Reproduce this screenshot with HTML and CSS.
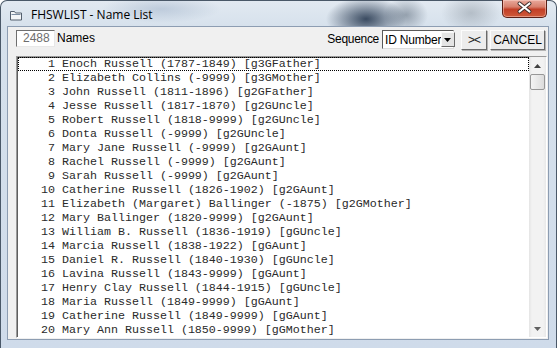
FILE: index.html
```
<!DOCTYPE html>
<html lang="en">
<head>
    <link rel="stylesheet" href="styles.css">
    <meta charset="UTF-8">
    <title>FHSWLIST - Name List</title>
</head>
<body>
    <div class="window">
        <div class="titlebar">
            <svg class="app-icon" width="14" height="12" viewBox="0 0 14 12">
                <path d="M1.5 2.5 h4 l1 1.5 h6 v7 h-11 z" fill="#f4f6f8" stroke="#55606e" stroke-width="1"/>
                <path d="M2.5 5.5 h9" stroke="#7d8ea3" stroke-width="1"/>
            </svg>
            <span class="title">FHSWLIST - Name List</span>
            <div class="close">
                <svg width="45" height="18" viewBox="0 0 45 18">
                    <path d="M17.5 4.5 l10 8 M27.5 4.5 l-10 8" stroke="#3b2a28" stroke-width="4" stroke-linecap="round"/>
                    <path d="M17.5 4.5 l10 8 M27.5 4.5 l-10 8" stroke="#ffffff" stroke-width="2.2" stroke-linecap="round"/>
                </svg>
            </div>
        </div>

        <div class="client">
            <div class="toolbar">
                <div class="count">2488</div>
                <span class="label">Names</span>
                <span class="label seq">Sequence</span>
                <div class="select">
                    <span>ID Number</span>
                    <div class="drop">
                        <svg width="8" height="4" viewBox="0 0 8 4"><path d="M0 0 h7 l-3.5 4 z" fill="#000"/></svg>
                    </div>
                </div>
                <div class="btn swap">&gt;&lt;</div>
                <div class="btn cancel">CANCEL</div>
            </div>

            <div class="list">
                <div class="rows">
                    <div class="row focus">    1 Enoch Russell (1787-1849) [g3GFather]</div>
                    <div class="row">    2 Elizabeth Collins (-9999) [g3GMother]</div>
                    <div class="row">    3 John Russell (1811-1896) [g2GFather]</div>
                    <div class="row">    4 Jesse Russell (1817-1870) [g2GUncle]</div>
                    <div class="row">    5 Robert Russell (1818-9999) [g2GUncle]</div>
                    <div class="row">    6 Donta Russell (-9999) [g2GUncle]</div>
                    <div class="row">    7 Mary Jane Russell (-9999) [g2GAunt]</div>
                    <div class="row">    8 Rachel Russell (-9999) [g2GAunt]</div>
                    <div class="row">    9 Sarah Russell (-9999) [g2GAunt]</div>
                    <div class="row">   10 Catherine Russell (1826-1902) [g2GAunt]</div>
                    <div class="row">   11 Elizabeth (Margaret) Ballinger (-1875) [g2GMother]</div>
                    <div class="row">   12 Mary Ballinger (1820-9999) [g2GAunt]</div>
                    <div class="row">   13 William B. Russell (1836-1919) [gGUncle]</div>
                    <div class="row">   14 Marcia Russell (1838-1922) [gGAunt]</div>
                    <div class="row">   15 Daniel R. Russell (1840-1930) [gGUncle]</div>
                    <div class="row">   16 Lavina Russell (1843-9999) [gGAunt]</div>
                    <div class="row">   17 Henry Clay Russell (1844-1915) [gGUncle]</div>
                    <div class="row">   18 Maria Russell (1849-9999) [gGAunt]</div>
                    <div class="row">   19 Catherine Russell (1849-9999) [gGAunt]</div>
                    <div class="row">   20 Mary Ann Russell (1850-9999) [gGMother]</div>
                </div>
                <div class="scrollbar">
                    <div class="arrow">
                        <svg width="7" height="4" viewBox="0 0 7 4"><path d="M3.5 0 l3.5 4 h-7 z" fill="#404040"/></svg>
                    </div>
                    <div class="thumb"></div>
                    <div class="track"></div>
                    <div class="arrow">
                        <svg width="7" height="4" viewBox="0 0 7 4"><path d="M0 0 h7 l-3.5 4 z" fill="#606060"/></svg>
                    </div>
                </div>
            </div>
        </div>
    </div>
</body>
</html>
```

FILE: styles.css
```
body {
    margin: 0;
    width: 557px;
    height: 348px;
    overflow: hidden;
    background-color: #ffffff;
    font-family: "Liberation Sans", Arial, sans-serif;
    font-size: 12px;
}

.window {
    box-sizing: border-box;
    width: 557px;
    height: 348px;
    display: flex;
    flex-direction: column;
    border: 1px solid #4a5868;
    border-bottom: none;
    border-radius: 7px 7px 0 0;
    background:
        radial-gradient(ellipse 40px 22px at 365px 18px, rgba(30, 48, 72, 0.85), rgba(30, 48, 72, 0) 100%),
        radial-gradient(ellipse 22px 18px at 405px 14px, rgba(90, 104, 120, 0.55), rgba(90, 104, 120, 0) 100%),
        radial-gradient(ellipse 60px 14px at 160px 8px, rgba(150, 170, 195, 0.45), rgba(150, 170, 195, 0) 100%),
        radial-gradient(ellipse 30px 20px at 470px 12px, rgba(120, 130, 140, 0.4), rgba(120, 130, 140, 0) 100%),
        linear-gradient(to bottom, #e2e9f1 0px, #d6e1ec 26px, #cfdbea 100%);
}

.titlebar {
    height: 25px;
    display: flex;
    align-items: flex-start;
    flex-shrink: 0;
}

.app-icon {
    margin: 8px 0 0 8px;
}

.title {
    margin: 6px 0 0 8px;
    font-family: "Open Sans", "Noto Sans", sans-serif;
    font-size: 12px;
    line-height: 16px;
    color: #000;
}

.close {
    margin: -1px 9px 0 auto;
    width: 45px;
    height: 18px;
    box-sizing: border-box;
    border: 1px solid #5b1f16;
    border-top: none;
    border-radius: 0 0 5px 5px;
    background: linear-gradient(to bottom, #e9a99c 0%, #d8806d 40%, #c23f27 55%, #cf5a3a 100%);
    box-shadow: inset 0 0 0 1px rgba(255, 220, 210, 0.45);
}

.close svg {
    display: block;
    margin: -1px 0 0 -1px;
}

.client {
    flex: 1;
    margin: 0 7px 8px 6px;
    border: 1px solid #8d9db2;
    background-color: #f0f0f0;
    display: flex;
    flex-direction: column;
}

.toolbar {
    height: 29px;
    display: flex;
    align-items: flex-start;
    padding: 3px 3px 0 8px;
    box-sizing: border-box;
}

.count {
    width: 39px;
    height: 17px;
    box-sizing: border-box;
    border: 1px solid;
    border-color: #6f6f6f #e8e8e8 #e8e8e8 #6f6f6f;
    background-color: #fff;
    color: #6d6d6d;
    padding-left: 6px;
    line-height: 15px;
}

.label {
    margin-left: 2px;
    line-height: 16px;
    color: #000;
}

.seq {
    margin-left: auto;
    margin-top: 1px;
    letter-spacing: -0.3px;
}

.select {
    margin-left: 3px;
    width: 72px;
    height: 19px;
    box-sizing: border-box;
    border: 1px solid;
    border-color: #5a5a5a #dcdcdc #dcdcdc #5a5a5a;
    background-color: #fff;
    display: flex;
    align-items: center;
    padding-left: 2px;
    font-size: 12px;
}

.select span {
    flex: 1;
    white-space: nowrap;
    letter-spacing: -0.2px;
}

.drop {
    width: 14px;
    height: 15px;
    margin-right: 1px;
    flex-shrink: 0;
    box-sizing: border-box;
    border: 1px solid;
    border-color: #f8f8f8 #6a6a6a #6a6a6a #f8f8f8;
    background-color: #e4e4e4;
    display: flex;
    align-items: center;
    justify-content: center;
}

.drop svg {
    display: block;
}

.btn {
    height: 20px;
    box-sizing: border-box;
    border: 1px solid;
    border-color: #fcfcfc #6a6a6a #6a6a6a #fcfcfc;
    box-shadow: 1px 1px 0 #b4b4b4;
    background-color: #ececec;
    display: flex;
    align-items: center;
    justify-content: center;
    color: #000;
    font-size: 12px;
}

.swap {
    width: 26px;
    margin-left: 7px;
    letter-spacing: -1px;
    font-weight: 300;
    color: #222;
}

.cancel {
    width: 55px;
    margin-left: 3px;
}

.list {
    height: 282px;
    margin: 0 1px 0 8px;
    box-sizing: border-box;
    border: 1px solid;
    border-color: #9a9a9a #ffffff #ffffff #9a9a9a;
    box-shadow: inset 1px 1px 0 #5e5e5e;
    background-color: #fff;
    display: flex;
}

.rows {
    flex: 1;
    padding-left: 1px;
    overflow: hidden;
}

.row {
    height: 14px;
    line-height: 14px;
    padding-left: 2px;
    white-space: pre;
    font-family: "Liberation Mono", "Courier New", monospace;
    font-size: 11.67px;
    color: #2a2a2a;
}

.focus {
    outline: 1px dotted #000;
    outline-offset: -1px;
}

.scrollbar {
    width: 17px;
    display: flex;
    flex-direction: column;
    background: linear-gradient(to right, #e4e4e4 0px, #f2f2f2 3px, #f2f2f2 14px, #e8e8e8 17px);
}

.arrow {
    height: 17px;
    display: flex;
    align-items: center;
    justify-content: center;
}

.arrow svg {
    display: block;
}

.thumb {
    height: 16px;
    margin: 0 1px;
    box-sizing: border-box;
    border: 1px solid #979797;
    border-radius: 2px;
    background: linear-gradient(to right, #f4f4f4, #dcdcdc);
}

.track {
    flex: 1;
}
```
